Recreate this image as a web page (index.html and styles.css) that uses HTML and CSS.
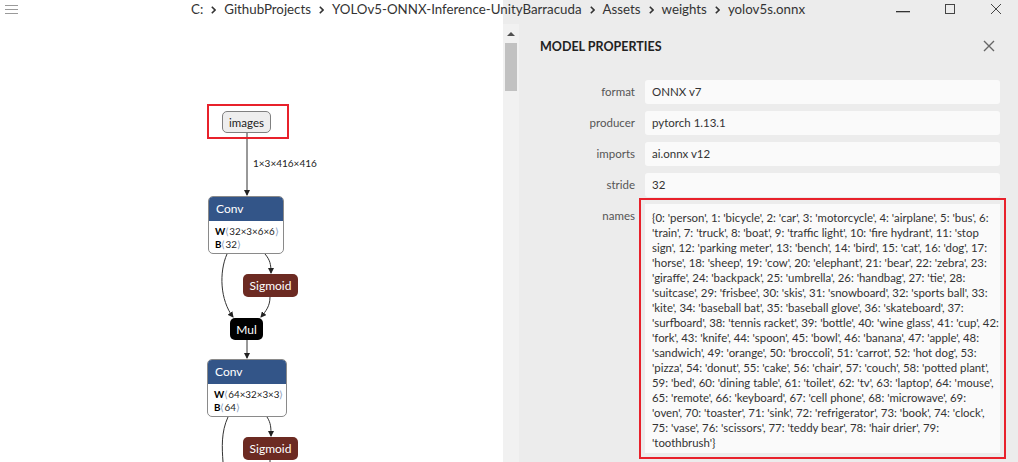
FILE: index.html
```html
<!DOCTYPE html>
<html>
<head>
<meta charset="utf-8">
<link rel="stylesheet" href="styles.css">
</head>
<body>
<div class="app">
  <div class="graph">
    <svg class="edges" width="503" height="462" viewBox="0 0 503 462">
      <defs>
        <marker id="arr" markerWidth="6" markerHeight="6" refX="5" refY="3" orient="auto" markerUnits="userSpaceOnUse">
          <path d="M0,0 L6,3 L0,6 Z" fill="#222"/>
        </marker>
      </defs>
      <g fill="none" stroke="#333" stroke-width="1">
        <path d="M247,133 L247,195" marker-end="url(#arr)"/>
        <path d="M227,254 C219,272 220,300 233,317" marker-end="url(#arr)"/>
        <path d="M265,254 C270,260 271,264 271,273" marker-end="url(#arr)"/>
        <path d="M270,297 C270,306 266,311 261,317" marker-end="url(#arr)"/>
        <path d="M247,340 L247,358" marker-end="url(#arr)"/>
        <path d="M228,417 C221,432 222,448 223,462"/>
        <path d="M267,417 C271,423 271,428 271,436" marker-end="url(#arr)"/>
        <path d="M270,460 L270,462"/>
      </g>
      <text x="253" y="167" class="edge-label">1×3×416×416</text>
    </svg>

    <div class="node input n-images">images</div>
    <div class="mark n-images-mark"></div>

    <div class="node op n-conv1">
      <div class="op-head">Conv</div>
      <div class="op-body">
        <div><b>W</b><span class="br">⟨</span>32×3×6×6<span class="br">⟩</span></div>
        <div><b>B</b><span class="br">⟨</span>32<span class="br">⟩</span></div>
      </div>
    </div>
    <div class="node act n-sig1">Sigmoid</div>
    <div class="node mul n-mul">Mul</div>
    <div class="node op n-conv2">
      <div class="op-head">Conv</div>
      <div class="op-body">
        <div><b>W</b><span class="br">⟨</span>64×32×3×3<span class="br">⟩</span></div>
        <div><b>B</b><span class="br">⟨</span>64<span class="br">⟩</span></div>
      </div>
    </div>
    <div class="node act n-sig2">Sigmoid</div>
  </div>

  <div class="panel">
    <div class="scroll">
      <div class="scroll-up"></div>
      <div class="scroll-thumb"></div>
    </div>
    <div class="props">
      <div class="props-head">
        <span class="props-title">MODEL PROPERTIES</span>
        <svg class="props-close" width="12" height="12" viewBox="0 0 12 12"><path d="M1,1 L11,11 M11,1 L1,11" stroke="#666" stroke-width="1.4"/></svg>
      </div>
      <div class="rows">
        <div class="label">format</div><div class="value">ONNX v7</div>
        <div class="label">producer</div><div class="value">pytorch 1.13.1</div>
        <div class="label">imports</div><div class="value">ai.onnx v12</div>
        <div class="label">stride</div><div class="value">32</div>
        <div class="label">names</div>
        <div class="value names">{0: 'person', 1: 'bicycle', 2: 'car', 3: 'motorcycle', 4: 'airplane', 5: 'bus', 6:<br>'train', 7: 'truck', 8: 'boat', 9: 'traffic light', 10: 'fire hydrant', 11: 'stop<br>sign', 12: 'parking meter', 13: 'bench', 14: 'bird', 15: 'cat', 16: 'dog', 17:<br>'horse', 18: 'sheep', 19: 'cow', 20: 'elephant', 21: 'bear', 22: 'zebra', 23:<br>'giraffe', 24: 'backpack', 25: 'umbrella', 26: 'handbag', 27: 'tie', 28:<br>'suitcase', 29: 'frisbee', 30: 'skis', 31: 'snowboard', 32: 'sports ball', 33:<br>'kite', 34: 'baseball bat', 35: 'baseball glove', 36: 'skateboard', 37:<br>'surfboard', 38: 'tennis racket', 39: 'bottle', 40: 'wine glass', 41: 'cup', 42:<br>'fork', 43: 'knife', 44: 'spoon', 45: 'bowl', 46: 'banana', 47: 'apple', 48:<br>'sandwich', 49: 'orange', 50: 'broccoli', 51: 'carrot', 52: 'hot dog', 53:<br>'pizza', 54: 'donut', 55: 'cake', 56: 'chair', 57: 'couch', 58: 'potted plant',<br>59: 'bed', 60: 'dining table', 61: 'toilet', 62: 'tv', 63: 'laptop', 64: 'mouse',<br>65: 'remote', 66: 'keyboard', 67: 'cell phone', 68: 'microwave', 69:<br>'oven', 70: 'toaster', 71: 'sink', 72: 'refrigerator', 73: 'book', 74: 'clock',<br>75: 'vase', 76: 'scissors', 77: 'teddy bear', 78: 'hair drier', 79:<br>'toothbrush'}</div>
      </div>
    </div>
  </div>

  <div class="titlebar">
    <svg class="menu" width="13" height="11" viewBox="0 0 13 11"><path d="M0,1.5 H13 M0,5.5 H13 M0,9.5 H13" stroke="#9a9a9a" stroke-width="1"/></svg>
    <div class="crumbs">
      <span>C:</span>
      <svg class="chev" width="5" height="8" viewBox="0 0 5 8"><path d="M0.8,0.8 L4,4 L0.8,7.2" fill="none" stroke="#333" stroke-width="1.6"/></svg>
      <span>GithubProjects</span>
      <svg class="chev" width="5" height="8" viewBox="0 0 5 8"><path d="M0.8,0.8 L4,4 L0.8,7.2" fill="none" stroke="#333" stroke-width="1.6"/></svg>
      <span>YOLOv5-ONNX-Inference-UnityBarracuda</span>
      <svg class="chev" width="5" height="8" viewBox="0 0 5 8"><path d="M0.8,0.8 L4,4 L0.8,7.2" fill="none" stroke="#333" stroke-width="1.6"/></svg>
      <span>Assets</span>
      <svg class="chev" width="5" height="8" viewBox="0 0 5 8"><path d="M0.8,0.8 L4,4 L0.8,7.2" fill="none" stroke="#333" stroke-width="1.6"/></svg>
      <span>weights</span>
      <svg class="chev" width="5" height="8" viewBox="0 0 5 8"><path d="M0.8,0.8 L4,4 L0.8,7.2" fill="none" stroke="#333" stroke-width="1.6"/></svg>
      <span>yolov5s.onnx</span>
    </div>
    <div class="winctl">
      <svg width="14" height="12" viewBox="0 0 14 12"><rect x="0" y="8" width="14" height="1.3" fill="#333"/></svg>
      <svg width="12" height="12" viewBox="0 0 12 12"><rect x="1.5" y="1.5" width="9" height="9" fill="none" stroke="#444" stroke-width="1"/></svg>
      <svg width="12" height="12" viewBox="0 0 12 12"><path d="M1,1 L11,11 M11,1 L1,11" stroke="#444" stroke-width="1"/></svg>
    </div>
  </div>
</div>
</body>
</html>
```

FILE: styles.css
```css
* { box-sizing: border-box; }
html, body { margin: 0; padding: 0; }
body {
  width: 1018px;
  height: 462px;
  overflow: hidden;
  font-family: Lato, "Noto Sans", sans-serif;
  color: #333;
  background: #fff;
}
.app {
  position: relative;
  display: flex;
  width: 1018px;
  height: 462px;
}
svg { flex: none; display: block; }

/* graph canvas */
.graph {
  position: relative;
  width: 503px;
  height: 462px;
  background: #fff;
  overflow: hidden;
  flex: none;
}
.edges { position: absolute; left: 0; top: 0; }
.edge-label {
  font-family: Lato, "Noto Sans", sans-serif;
  font-size: 10px;
  fill: #222;
}
.node {
  position: absolute;
  font-size: 12px;
  display: flex;
  align-items: center;
  justify-content: center;
}
.input {
  background: #eeeeee;
  border: 1.5px solid #808080;
  border-radius: 5px;
  color: #222;
  font-size: 11.5px;
}
.n-images { left: 222px; top: 111px; width: 49px; height: 22px; }
.mark {
  position: absolute;
  border: 2px solid #e8212b;
}
.n-images-mark { left: 207px; top: 104px; width: 82px; height: 35px; }

.op {
  flex-direction: column;
  align-items: stretch;
  justify-content: flex-start;
  border: 1px solid #8a8a8a;
  border-radius: 5px;
  overflow: hidden;
  background: #fff;
}
.op-head {
  background: #335588;
  color: #fff;
  height: 24px;
  line-height: 24px;
  padding-left: 7px;
  font-size: 12px;
}
.op-body {
  padding: 4px 0 0 6px;
  font-size: 9.8px;
  line-height: 13px;
  color: #222;
  white-space: nowrap;
}
.op-body b { font-weight: 700; color: #000; }
.op-body .br { color: #8aa0c0; }
.n-conv1 { left: 208px; top: 196px; width: 76px; height: 58px; }
.n-conv2 { left: 207px; top: 359px; width: 80px; height: 58px; }
.act {
  background: #6c2a22;
  color: #fff;
  border-radius: 5px;
}
.n-sig1 { left: 243px; top: 274px; width: 55px; height: 23px; }
.n-sig2 { left: 243px; top: 437px; width: 55px; height: 23px; }
.mul {
  background: #000;
  color: #fff;
  border-radius: 5px;
}
.n-mul { left: 230px; top: 318px; width: 33px; height: 22px; }

/* right panel */
.panel {
  flex: 1;
  min-width: 0;
  display: flex;
  background: #ececec;
}
.scroll {
  width: 16px;
  flex: none;
  margin-top: 24px;
  background: #f1f1f1;
  display: flex;
  flex-direction: column;
  align-items: center;
}
.scroll-up {
  margin-top: 8px;
  width: 0;
  height: 0;
  border-left: 4px solid transparent;
  border-right: 4px solid transparent;
  border-bottom: 4px solid #505050;
}
.scroll-thumb {
  margin-top: 7px;
  width: 12px;
  height: 48px;
  background: #c1c1c1;
}
.props {
  flex: 1;
  min-width: 0;
  padding: 36px 18px 0 0;
}
.props-head {
  display: flex;
  justify-content: space-between;
  align-items: center;
  height: 20px;
  padding-left: 21px;
  margin-bottom: 24px;
}
.props-title {
  font-weight: 700;
  font-size: 12.5px;
  letter-spacing: 0;
  color: #222;
}
.props-close { margin-right: 5px; }
.rows {
  display: grid;
  grid-template-columns: 116px minmax(0, 1fr);
  column-gap: 10px;
  row-gap: 7px;
  align-items: start;
}
.label {
  text-align: right;
  font-size: 11.5px;
  line-height: 24px;
  color: #555;
}
.value {
  background: #fafafa;
  border-radius: 3px;
  height: 24px;
  line-height: 24px;
  padding: 0 7px;
  font-size: 11.5px;
  color: #333;
}
.names {
  height: auto;
  font-size: 11.4px;
  line-height: 15px;
  padding: 6px 7px 3px;
  white-space: nowrap;
  border-radius: 0;
  outline: 2px solid #e8212b;
  outline-offset: 4px;
}

/* title bar overlay */
.titlebar {
  position: absolute;
  left: 0;
  top: 0;
  width: 1018px;
  height: 20px;
  display: flex;
  align-items: center;
}
.menu { margin-left: 5px; margin-top: -2px; }
.crumbs {
  margin-left: 173px;
  display: flex;
  align-items: center;
  gap: 8px;
  font-size: 13.3px;
  color: #333;
  margin-top: -2px;
}
.chev { margin-top: 1px; }
.winctl {
  margin-left: auto;
  display: flex;
  align-items: center;
  gap: 34px;
  margin-right: 16px;
  margin-top: -3px;
}
```
